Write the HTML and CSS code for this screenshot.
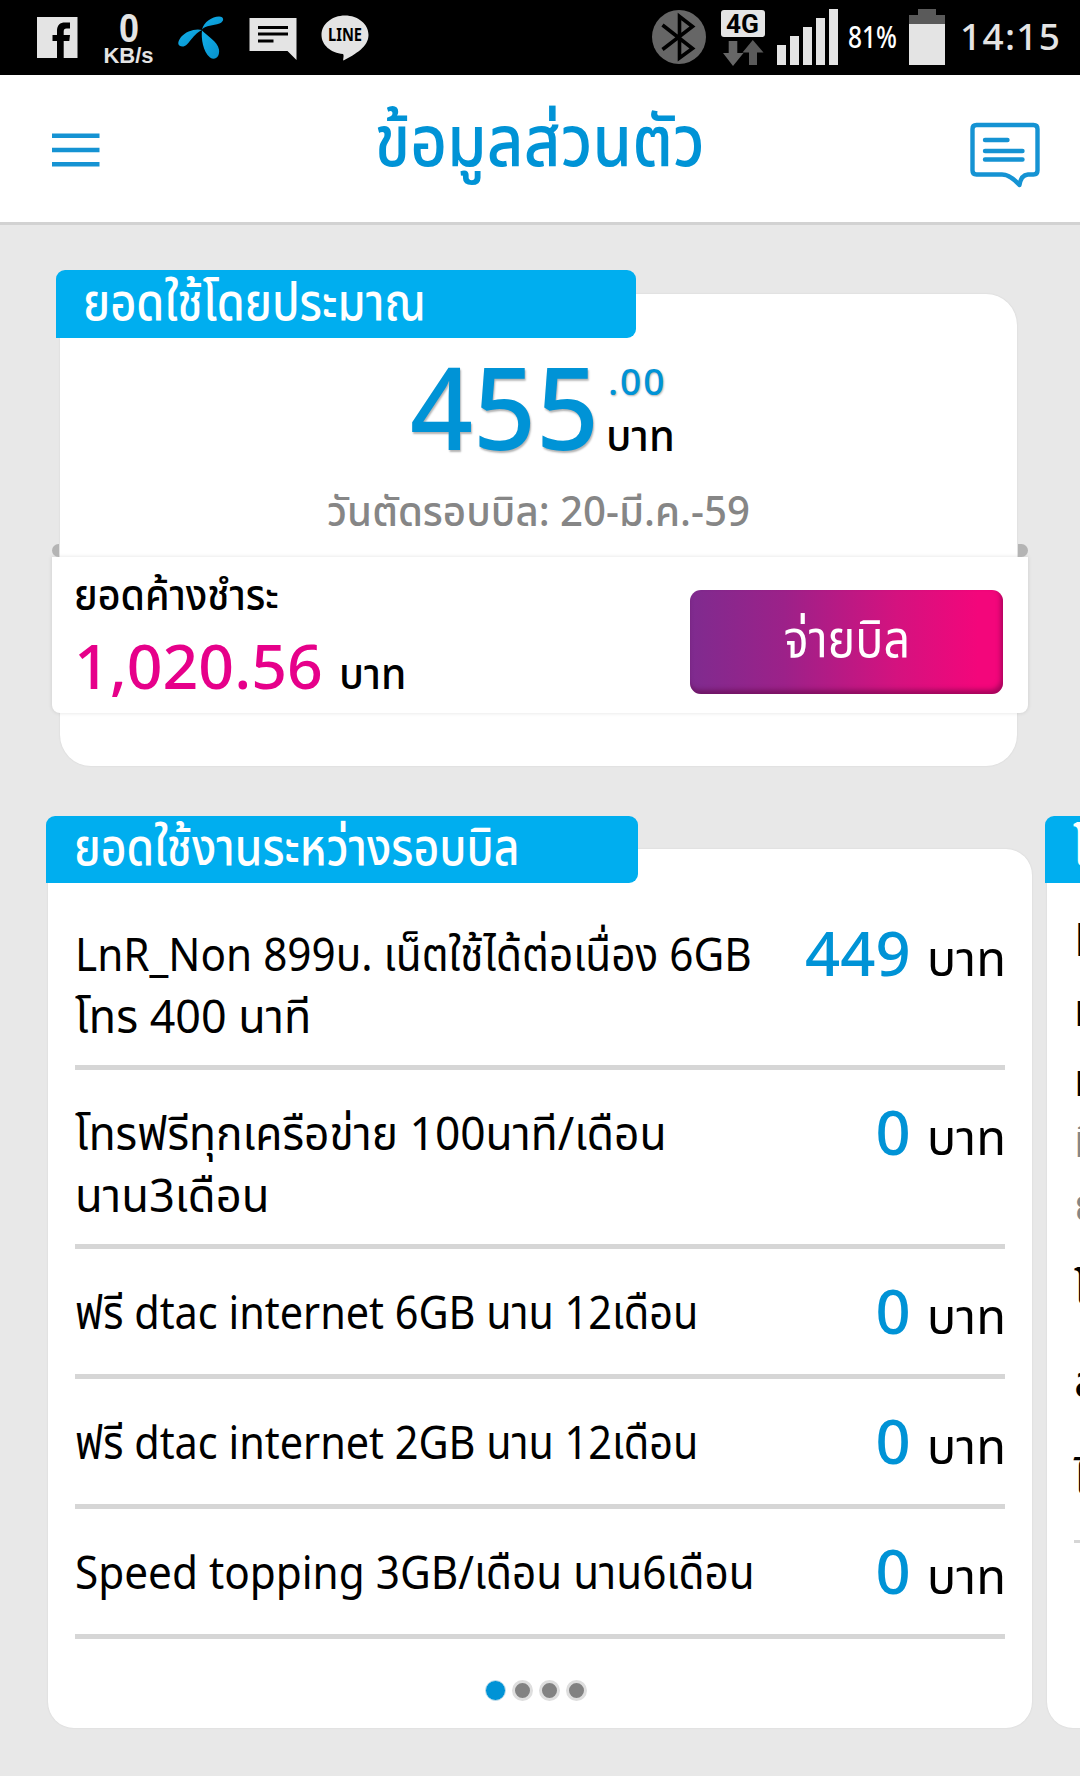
FILE: index.html
```html
<!DOCTYPE html>
<html lang="th">
<head>
<meta charset="utf-8">
<title>ข้อมูลส่วนตัว</title>
<link rel="stylesheet" href="styles.css">
</head>
<body>
<div class="statusbar">
  <div class="status-group">
    <svg width="60" height="75" viewBox="30 0 60 75"><path fill="#e4e4e4" d="M37 17H77.5V58H63.7V41H69.3L70 35H63.7V31.5C63.7 29.5 64.5 28.5 66.5 28.5H70V22.5H65C60 22.5 57 25 57 31V35H52.5V41H57V58H37Z"/></svg>
    <svg width="75" height="75" viewBox="90 0 75 75" class="net"><text x="119" y="41.500" font-size="40" textLength="20" lengthAdjust="spacingAndGlyphs">0</text><text x="103.500" y="62.500" font-size="22" textLength="50" lengthAdjust="spacingAndGlyphs">KB/s</text></svg>
    <svg width="71" height="75" viewBox="165 0 71 75">
      <defs><linearGradient id="leaf" x1="0" y1="0" x2="1" y2="1"><stop offset="0" stop-color="#12b0ea"/><stop offset="1" stop-color="#0790cc"/></linearGradient></defs>
      <g fill="url(#leaf)"><path d="M202 29.500C204 22 212 16.500 219 16.500C224.500 16.500 224.500 21.500 219.500 23.500C213 26 206 25 202 29.500Z"/><path d="M202 30C196 28 186 31 181 37C176.500 43 178 46.500 182.500 46.500C189 46.500 191 35.500 202 30Z"/><path d="M202 30.500C201 38 203 52 210 57.500C215 61 220 57 219 49.500C217.500 41 207 36 202 30.500Z"/></g>
    </svg>
    <svg width="74" height="75" viewBox="236 0 74 75"><path fill="#e4e4e4" d="M249.500 18H296.500V60L287.500 51H249.500Z"/><path stroke="#000" stroke-width="2.800" d="M258 27.500H288M258 34H288M258 41H273.500"/></svg>
    <svg width="70" height="75" viewBox="310 0 70 75"><path fill="#e4e4e4" d="M345 15.500C358 15.500 368.500 24 368.500 35C368.500 46.500 356 54 343.500 60.500C342.500 60 344.500 56 343 54C331 53 321.500 45 321.500 35C321.500 24 332 15.500 345 15.500Z"/><text class="line-label" x="328" y="40.500" font-size="17" textLength="34" lengthAdjust="spacingAndGlyphs">LINE</text></svg>
  </div>
  <div class="status-group">
    <svg width="72" height="75" viewBox="640 0 72 75"><circle cx="679" cy="37" r="27" fill="#666"/><path fill="none" stroke="#000" stroke-width="3.600" d="M662.500 25L692.500 48.500L679.500 58V16.500L692.500 26.500L662.500 49.500"/></svg>
    <svg width="58" height="75" viewBox="712 0 58 75"><rect x="721" y="10" width="44" height="27" rx="3" fill="#e4e4e4"/><text class="cell-label" x="726" y="32.500" font-size="25" textLength="33" lengthAdjust="spacingAndGlyphs">4G</text><path fill="#666" d="M728.700 41H737.300V53H743.500L733 66L723 53H728.700Z"/><path fill="#5a5a5a" d="M752.800 40L763.500 52.500H757V65H749V52.500H742.500Z"/></svg>
    <svg width="72" height="75" viewBox="770 0 72 75"><path fill="#e4e4e4" d="M777 45h9v20h-9zM790 36h9v29h-9zM803 27h9v38h-9zM816 18h9v47h-9zM829 9h9v56h-9z"/></svg>
    <svg width="60" height="75" viewBox="842 0 60 75"><text class="battery-label" x="848" y="47.500" font-size="30" textLength="49" lengthAdjust="spacingAndGlyphs">81%</text></svg>
    <svg width="50" height="75" viewBox="902 0 50 75"><path fill="#5a5a5a" d="M918 9h18v6h9v10h-36v-10h9z"/><path fill="#e4e4e4" d="M909 24h36v41h-36z"/></svg>
    <svg width="128" height="75" viewBox="952 0 128 75"><text class="clock" x="960" y="49.500" font-size="37" textLength="100">14:15</text></svg>
  </div>
</div>

<header class="header">
  <svg width="48" height="36" viewBox="52 132 48 36"><path stroke="#1593d3" stroke-width="4.600" d="M52 135.700H99.500M52 150H99.500M52 164.300H99.500"/></svg>
  <h1 class="title">ข้อมูลส่วนตัว</h1>
  <svg width="72" height="70" viewBox="969 121 72 70" fill="none" stroke="#1593d3" stroke-width="4.400" stroke-linecap="round" stroke-linejoin="round"><path d="M976.500 125H1033.500Q1037.500 125 1037.500 129V170.500Q1037.500 174.500 1033.500 174.500H1028Q1021 175 1019.500 185Q1010 174.500 1002 174.500H976.500Q972.500 174.500 972.500 170.500V129Q972.500 125 976.500 125Z"/><path d="M985 140H1007.500M985 151H1022.500M985 159.500H1022.500"/></svg>
</header>

<main>
  <section class="balance">
    <h2 class="ribbon ribbon-balance"><span>ยอดใช้โดยประมาณ</span></h2>
    <div class="total">
      <span class="total-int">455</span>
      <span class="total-side"><span class="total-dec">.00</span><span class="total-unit">บาท</span></span>
    </div>
    <p class="cutoff">วันตัดรอบบิล: 20-มี.ค.-59</p>
    <div class="due">
      <div class="due-text">
        <p class="due-label"><span>ยอดค้างชำระ</span></p>
        <p class="due-amount"><span class="due-value">1,020.56</span><span class="due-unit">บาท</span></p>
      </div>
      <button class="pay"><span>จ่ายบิล</span></button>
    </div>
  </section>

  <div class="carousel">
    <section class="slide">
      <h2 class="ribbon ribbon-usage"><span>ยอดใช้งานระหว่างรอบบิล</span></h2>
      <ul class="usage">
        <li class="row row-tall"><div class="name"><span class="fit-a">LnR_Non 899บ. เน็ตใช้ได้ต่อเนื่อง 6GB</span><span class="fit-d">โทร 400 นาที</span></div><div class="amount"><b>449</b><i>บาท</i></div></li>
        <li class="row row-tall"><div class="name"><span class="fit-c">โทรฟรีทุกเครือข่าย 100นาที/เดือน</span><span class="fit-e">นาน3เดือน</span></div><div class="amount"><b>0</b><i>บาท</i></div></li>
        <li class="row"><div class="name"><span class="fit-b">ฟรี dtac internet 6GB นาน 12เดือน</span></div><div class="amount"><b>0</b><i>บาท</i></div></li>
        <li class="row"><div class="name"><span class="fit-b">ฟรี dtac internet 2GB นาน 12เดือน</span></div><div class="amount"><b>0</b><i>บาท</i></div></li>
        <li class="row"><div class="name"><span class="fit-a">Speed topping 3GB/เดือน นาน6เดือน</span></div><div class="amount"><b>0</b><i>บาท</i></div></li>
      </ul>
      <div class="dots"><i class="dot dot-on"></i><i class="dot"></i><i class="dot"></i><i class="dot"></i></div>
    </section>
    <section class="slide slide-next">
      <h2 class="ribbon ribbon-usage"><span>โ</span></h2>
      <div class="peek">
        <p class="peek-first">L</p>
        <p class="peek-line">ท</p>
        <p class="peek-line">ท</p>
        <p class="peek-note">ที</p>
        <p class="peek-note peek-note-2">ย</p>
        <p class="peek-call">โ</p>
        <p class="peek-sub">ล</p>
        <p class="peek-last">ไ</p>
      </div>
    </section>
  </div>
</main>
</body>
</html>
```
FILE: styles.css
```css
* { box-sizing: border-box; margin: 0; padding: 0; }

body {
  width: 1080px;
  height: 1776px;
  overflow: hidden;
  background: #e8e8e8;
  color: #000;
  font-family: "Noto Sans Thai", "Noto Sans", sans-serif;
}

/* status bar */
.statusbar {
  display: flex;
  justify-content: space-between;
  height: 75px;
  padding-left: 30px;
  background: #000;
}
.status-group { display: flex; }
.net { fill: #e4e4e4; font-family: "Liberation Sans", sans-serif; font-weight: 700; }
.line-label { fill: #000; font-family: "Noto Sans", sans-serif; font-weight: 700; }
.cell-label { fill: #000; font-family: Roboto, sans-serif; font-weight: 700; }
.battery-label { fill: #fff; font-family: "Noto Sans Thai", "Noto Sans", sans-serif; font-weight: 500; }
.clock { fill: #e4e4e4; font-family: "Noto Sans Thai", "Noto Sans", sans-serif; font-weight: 500; }

/* header */
.header {
  display: flex;
  justify-content: space-between;
  height: 150px;
  padding: 57px 39px 0 52px;
  background: #fff;
  border-bottom: 3px solid #d2d2d2;
}
.header svg { flex: none; }
.header svg:last-child { margin-top: -11px; }
.title {
  height: 80px;
  margin: -28px 0 0 10px;
  color: #0093d6;
  font-size: 72px;
  font-weight: 500;
  line-height: 80px;
  transform: scaleX(.885);
}

/* shared blue tab */
.ribbon {
  background: #00aeef;
  border-radius: 9px 9px 9px 0;
  color: #fff;
  font-size: 51px;
  font-weight: 500;
  white-space: nowrap;
}
.ribbon span { display: inline-block; transform-origin: 0 50%; }

/* balance card */
.balance {
  display: flex;
  flex-direction: column;
  width: 957px;
  height: 472px;
  margin: 69px 0 0 60px;
  background: #fff;
  border-radius: 0 31px 31px 31px;
  box-shadow: 0 0 2px rgba(0, 0, 0, .1);
}
.ribbon-balance {
  width: 580px;
  height: 68px;
  margin: -24px 0 1px -4px;
  padding-left: 27px;
  line-height: 70px;
}
.ribbon-balance span { transform: scaleX(.885); }
.total { display: flex; height: 125px; padding-left: 350px; color: #0093d6; }
.total-int {
  width: 194px;
  font-size: 114px;
  font-weight: 500;
  line-height: 152px;
  transform: scaleX(.967);
  transform-origin: 0 50%;
  text-shadow: 1px 2px 2px rgba(0, 0, 0, .3);
}
.total-side { display: flex; flex-direction: column; padding: 17px 0 0 2px; }
.total-dec {
  height: 56px;
  margin-left: 2px;
  font-size: 37px;
  font-weight: 500;
  letter-spacing: 2px;
  line-height: 56px;
  text-shadow: 1px 1px 2px rgba(0, 0, 0, .3);
}
.total-unit { color: #000; font-size: 43px; font-weight: 500; line-height: 52px; transform: scaleX(.97); transform-origin: 0 50%; }
.cutoff {
  height: 93px;
  margin-top: 8px;
  color: #868686;
  font-size: 41px;
  font-weight: 500;
  line-height: 83px;
  text-align: center;
  transform: scaleX(.98);
}
.due {
  position: relative;
  display: flex;
  flex: none;
  justify-content: space-between;
  width: 976px;
  height: 156px;
  margin: -8px 0 0 -8px;
  padding: 33px 25px 0 22px;
  background: #fff;
  border-radius: 0 0 8px 8px;
  box-shadow: 0 0 4px rgba(0, 0, 0, .12);
}
.due::before, .due::after {
  content: "";
  position: absolute;
  top: -13px;
  left: 0;
  width: 7px;
  height: 13px;
  background: #b4b4b4;
  border-radius: 7px 0 0 7px;
}
.due::after { right: 0; left: auto; width: 10px; border-radius: 0 8px 8px 0; }
.due-label { height: 60px; margin-top: -23px; font-size: 43px; font-weight: 500; line-height: 60px; }
.due-label span { display: inline-block; transform: scaleX(.915); transform-origin: 0 50%; }
.due-amount { display: flex; align-items: baseline; line-height: 87px; }
.due-value { width: 265px; color: #e6008a; font-size: 61px; font-weight: 500; transform: scaleX(1.025); transform-origin: 0 50%; }
.due-unit { font-size: 43px; font-weight: 500; transform: scaleX(.95); transform-origin: 0 50%; }
.pay {
  width: 313px;
  height: 104px;
  border: 0;
  border-radius: 11px;
  background: linear-gradient(90deg, #7f2b8f, #9c2189 30%, #d4127f 66%, #f3067b 92%);
  box-shadow: inset -2px -4px 5px rgba(90, 0, 60, .5);
  color: #fff;
  font: 400 51px/74px "Noto Sans Thai", "Noto Sans", sans-serif;
}
.pay span { display: inline-block; transform: translateX(1px) scaleX(.916); }

/* usage carousel */
.carousel { display: flex; gap: 15px; margin: 83px 0 0 48px; }
.slide {
  flex: none;
  width: 984px;
  height: 879px;
  background: #fff;
  border-radius: 0 26px 26px 26px;
  box-shadow: 0 0 2px rgba(0, 0, 0, .1);
}
.ribbon-usage {
  width: 592px;
  height: 67px;
  margin: -33px 0 0 -2px;
  padding-left: 28px;
  line-height: 67px;
}
.ribbon-usage span { transform: scaleX(.872); }
.usage { padding: 8px 27px 0; list-style: none; }
.row {
  display: flex;
  justify-content: space-between;
  height: 130px;
  padding-top: 35px;
  border-bottom: 5px solid #d6d6d6;
}
.row-tall { height: 179px; }
.name { width: 700px; font-size: 46px; line-height: 62px; white-space: nowrap; }
.name span { display: block; transform-origin: 0 50%; }
.fit-a { transform: scaleX(.919); }
.fit-b { transform: scaleX(.9); }
.fit-c { transform: scaleX(.963); }
.fit-d { transform: scaleX(.975); }
.fit-e { transform: scaleX(.985); }
.amount { margin: 1px -1px 0 0; line-height: 62px; white-space: nowrap; }
.amount b { color: #0093d6; font-size: 61.5px; font-weight: 500; }
.amount i { margin-left: 16px; font-size: 49px; font-style: normal; }
.dots { display: flex; gap: 6px; padding: 41px 0 0 437px; }
.dot { width: 21px; height: 21px; background: #828282; border: 3px solid #dedede; border-radius: 50%; }
.dot-on { background: #0093d6; border: 1px solid #c8dfea; }

/* next slide, peeking in */
.peek { padding-left: 27px; font-size: 45px; line-height: 60px; }
.peek-first { margin-top: 29px; }
.peek-line { margin-top: 10px; }
.peek-note { margin-top: 1px; color: #868686; }
.peek-note-2 { margin-top: 4px; }
.peek-call { margin-top: 23px; }
.peek-sub { margin-top: 33px; }
.peek-last { height: 93px; margin-top: 37px; border-bottom: 3px solid #d6d6d6; }
```
